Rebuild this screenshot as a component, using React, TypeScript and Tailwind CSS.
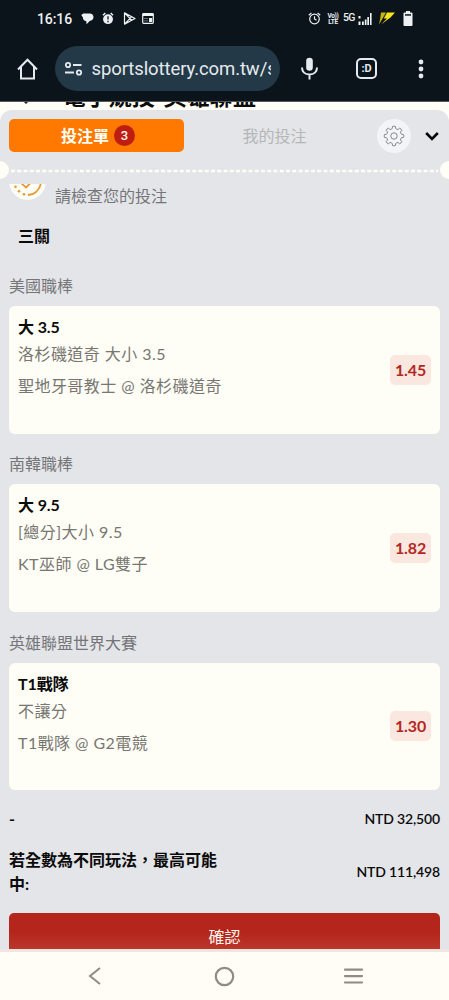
type Bet = {
  league: string;
  pick: string;
  market: string;
  match: string;
  odds: string;
};

const BETS: Bet[] = [
  {
    league: "美國職棒",
    pick: "大 3.5",
    market: "洛杉磯道奇 大小 3.5",
    match: "聖地牙哥教士 @ 洛杉磯道奇",
    odds: "1.45",
  },
  {
    league: "南韓職棒",
    pick: "大 9.5",
    market: "[總分]大小 9.5",
    match: "KT巫師 @ LG雙子",
    odds: "1.82",
  },
  {
    league: "英雄聯盟世界大賽",
    pick: "T1戰隊",
    market: "不讓分",
    match: "T1戰隊 @ G2電競",
    odds: "1.30",
  },
];

// Eight-toothed outline, one tooth every 45 degrees
const GEAR_POINTS = Array.from({ length: 8 }, (_, i) => {
  const at = (r: number, deg: number) => {
    const a = ((i * 45 + deg) * Math.PI) / 180;
    return `${(12 + r * Math.sin(a)).toFixed(2)} ${(12 - r * Math.cos(a)).toFixed(2)}`;
  };
  return `${at(8.4, -13)} L${at(10.5, -9)} Q${at(11.2, 0)} ${at(10.5, 9)} L${at(8.4, 13)} Q${at(7.8, 22.5)} ${at(8.4, 32)}`;
});
const GEAR_PATH = `M${GEAR_POINTS.join(" L")} Z`;

const StatusBar = () => (
  <div className="flex h-[37px] items-center justify-between pl-[37px] pr-[36px] text-[#eef1f3]">
    <div className="flex items-center">
      <span className="w-[36px] font-[Roboto] text-[14px] font-medium leading-none tracking-[-0.1px]">16:16</span>
      <svg className="ml-[8px]" width="13" height="12" viewBox="0 0 13 12" fill="currentColor">
        <path d="M3.5.5h5.2c2.3 0 3.8 1.6 3.8 3.6 0 2.2-1.6 3.7-3.8 3.8L5.6 11.3 5.2 8C3 7.7 1.9 6.3 1.9 4.4L.4 2.2C.9 1.1 2 .5 3.5.5z" />
      </svg>
      <svg className="ml-[8px]" width="12" height="13" viewBox="0 0 12 13">
        <circle cx="6" cy="7.2" r="4.9" fill="currentColor" />
        <path d="M1 3.2L3.3 1M11 3.2L8.7 1" stroke="currentColor" strokeWidth="1.5" />
        <path d="M6 4.2v3.4M6 8.8v1.4" stroke="#0b141a" strokeWidth="1.3" />
      </svg>
      <svg className="ml-[9px]" width="13" height="13" viewBox="0 0 13 13" fill="none" stroke="currentColor" strokeWidth="1.2" strokeLinejoin="round">
        <path d="M1.5.9v11.2L12 6.5zM1.5.9L8.7 8.3M1.5 12.1L8.7 4.7" />
      </svg>
      <svg className="ml-[6px]" width="12" height="11" viewBox="0 0 12 11">
        <rect x=".7" y=".7" width="10.6" height="9.6" rx=".8" fill="none" stroke="currentColor" strokeWidth="1.2" />
        <path d="M.7.7h10.6v2.4H.7zM7 5h3.2v4H7z" fill="currentColor" />
        <path d="M2 5.5h4M2 7.8h4" stroke="#76808a" strokeWidth=".8" />
      </svg>
    </div>
    <div className="flex items-center">
      <svg width="13" height="13" viewBox="0 0 13 13" fill="none" stroke="currentColor" strokeWidth="1.2">
        <circle cx="6.5" cy="7" r="4.8" />
        <path d="M.8 3.3L3.4 1M12.2 3.3L9.6 1M6.5 4.2V7l2 1.3" />
      </svg>
      <div className="ml-[6px] w-[12px] text-center font-[Roboto] text-[6.5px] font-bold leading-[6px] tracking-[-0.3px]">
        <div>Vo))</div>
        <div>LTE</div>
      </div>
      <span className="ml-[4px] w-[12px] font-[Roboto] text-[10.5px] font-medium leading-none tracking-[-0.8px]">5G</span>
      <svg className="ml-[3px]" width="14" height="12" viewBox="0 0 14 12" fill="currentColor">
        <path d="M.5 3h2v2.5h-2zM.5 8.5h2V12h-2zM4 8.5h1.8V12H4zM6.8 6.5h1.7V12H6.8zM9.3 4H11v8H9.3zM12 0h1.6v12H12z" />
      </svg>
      <svg className="ml-[7px]" width="16" height="13" viewBox="0 0 16 13">
        <path d="M2 .5h5L3.6 6.5 0 12.5 1.2 6.5z" fill="#c4b70c" />
        <path d="M8 .5h8L11.5 5.5 2 12.5 8 6.5H4.8z" fill="#f2e31a" />
      </svg>
      <svg className="ml-[8px]" width="10" height="15" viewBox="0 0 10 15" fill="currentColor">
        <path d="M3 0h4v1.5H3zM1.5 1.5h7a1 1 0 0 1 1 1V14a1 1 0 0 1-1 1h-7a1 1 0 0 1-1-1V2.5a1 1 0 0 1 1-1z" />
        <path d="M2 3.2h6v1.5H2z" fill="#0b141a" />
      </svg>
    </div>
  </div>
);

const BrowserBar = () => (
  <div className="flex h-[64px] items-center pb-px text-[#e5eaee]">
    <svg className="ml-[17px] shrink-0" width="21" height="22" viewBox="0 0 21 22" fill="none" stroke="currentColor" strokeWidth="2">
      <path d="M1 11.5L10.5 1.8 20 11.5M4 9v11.5h13V9" />
    </svg>
    <div className="ml-[17px] flex h-[45px] w-[225px] shrink-0 items-center rounded-full bg-[#243947] pl-[10px]">
      <svg className="shrink-0" width="18" height="16" viewBox="0 0 18 16" fill="none" stroke="currentColor" strokeWidth="1.8">
        <circle cx="3" cy="4" r="2.2" />
        <path d="M8 4h8.5M0 11.5h9" />
        <circle cx="14" cy="11.5" r="2.2" />
      </svg>
      <span className="ml-[8.5px] w-[179.5px] overflow-hidden whitespace-nowrap font-[Roboto] text-[18.5px] leading-[28px] tracking-[-0.1px]">
        sportslottery.com.tw/s
      </span>
    </div>
    <svg className="ml-[21px] shrink-0" width="17" height="23" viewBox="0 0 17 23" fill="none" stroke="currentColor" strokeWidth="2">
      <rect x="5.2" y=".8" width="6.6" height="13" rx="3.3" fill="currentColor" stroke="none" />
      <path d="M1 10.5c0 4.3 3 7 7.5 7s7.5-2.7 7.5-7M8.5 17.5v5" />
    </svg>
    <div className="ml-[38px] flex h-[21px] w-[21px] shrink-0 items-center justify-center rounded-[5px] border-2 border-current font-[Roboto] text-[11px] font-bold leading-none">
      :D
    </div>
    <svg className="ml-[41px] shrink-0" width="6" height="20" viewBox="0 0 6 20" fill="currentColor">
      <circle cx="3" cy="3" r="2.4" />
      <circle cx="3" cy="10" r="2.4" />
      <circle cx="3" cy="17" r="2.4" />
    </svg>
  </div>
);

const TabBar = () => (
  <div className="flex h-[51px] shrink-0 items-center pl-[9px]">
    <div className="flex h-[33px] w-[175px] items-center justify-center gap-[5px] rounded-[5px] bg-[#ff7900] pl-[3px]">
      <span className="text-[16px] font-bold leading-none text-[#fffef6]">投注單</span>
      <span className="flex h-[21px] w-[21px] items-center justify-center rounded-full bg-[#be1e12] font-[Roboto] text-[13px] font-medium leading-none text-[#fff5ee]">
        3
      </span>
    </div>
    <span className="w-[181px] text-center text-[16px] leading-none text-[#b5b6b8]">我的投注</span>
    <div className="ml-[12px] flex h-[34px] w-[34px] items-center justify-center rounded-full bg-[#f3f4f6]">
      <svg width="22" height="22" viewBox="0 0 24 24" fill="none" stroke="#7d7f83" strokeWidth="1">
        <path d={GEAR_PATH} />
        <circle cx="12" cy="12" r="3.5" />
      </svg>
    </div>
    <svg className="ml-[14px]" width="14" height="10" viewBox="0 0 14 10" fill="none" stroke="#080808" strokeWidth="2.6">
      <path d="M1.2 2L7 7.8 12.8 2" />
    </svg>
  </div>
);

const Perforation = () => (
  <div className="flex h-[18px] shrink-0 items-center">
    <div className="h-[18px] w-[9px] rounded-r-full bg-[#fffef6]" />
    <svg className="mt-[2px] flex-1" height="4" fill="none">
      <line x1="2" y1="2" x2="429" y2="2" stroke="#fffef6" strokeWidth="2.5" strokeDasharray="4 2.25" />
    </svg>
    <div className="h-[18px] w-[9px] rounded-l-full bg-[#fffef6]" />
  </div>
);

const BetCard = ({ bet }: { bet: Bet }) => (
  <section className="mb-[18.3px] h-[160px]">
    <h3 className="h-[32px] pt-[2px] text-[16px] leading-[20px] text-[#747578]">{bet.league}</h3>
    <div className="flex h-[127.5px] items-center justify-between rounded-[6px] bg-[#fffef6] px-[9px]">
      <div className="h-full pt-[9px] text-[#777671]">
        <div className="text-[16px] font-bold leading-[24px] tracking-[-0.1px] text-[#0b0b0b]">{bet.pick}</div>
        <div className="mt-[2px] text-[16px] leading-[26px] tracking-[0.45px]">{bet.market}</div>
        <div className="mt-[6px] text-[16px] leading-[26px] tracking-[0.45px]">{bet.match}</div>
      </div>
      <span className="flex h-[30px] w-[41px] items-center justify-center rounded-[5px] bg-[#f9e7e0] text-[16px] font-bold tracking-[-0.1px] text-[#b5271e]">
        {bet.odds}
      </span>
    </div>
  </section>
);

const NavBar = () => (
  <nav className="flex h-[48px] shrink-0 items-center bg-[#fffdf6] text-[#8f8c86]">
    <svg className="ml-[88px]" width="13" height="20" viewBox="0 0 13 20" fill="none" stroke="currentColor" strokeWidth="2">
      <path d="M12 2L2 10l10 8" />
    </svg>
    <svg className="ml-[113px]" width="21" height="21" viewBox="0 0 21 21" fill="none" stroke="currentColor" strokeWidth="2.2">
      <circle cx="10.5" cy="10.5" r="8.7" />
    </svg>
    <svg className="ml-[108px]" width="21" height="16" viewBox="0 0 21 16" stroke="currentColor" strokeWidth="2.2" strokeLinecap="round">
      <path d="M2 1.7h17M2 8.1h17M2 14.5h17" />
    </svg>
  </nav>
);

const App = () => {
  return (
    <div className="flex h-[1000px] w-[449px] flex-col overflow-hidden bg-[#fffef6] font-['Lato','Noto_Sans_CJK_TC',sans-serif]">
      <header className="h-[101px] shrink-0 bg-[#0b141a]">
        <StatusBar />
        <BrowserBar />
      </header>

      {/* Page title scrolled under the browser bar */}
      <div className="flex h-[9px] shrink-0 items-end overflow-hidden border-t border-[#55595a]">
        <svg className="mb-[6px] ml-[23px] shrink-0" width="6" height="2" viewBox="0 0 6 2" fill="none" stroke="#222" strokeWidth="1.5">
          <path d="M1-1l2 2 2-2" />
        </svg>
        <h1 className="mb-px ml-[33.5px] h-[26px] whitespace-nowrap text-[23px] font-bold leading-[26px] tracking-[0.1px] text-[#0b0b0b]">
          電子競技-英雄聯盟
        </h1>
      </div>

      <main className="flex min-h-0 flex-1 flex-col overflow-hidden rounded-t-[12px] bg-[#e4e5e8]">
        <TabBar />
        <Perforation />

        <div className="mt-[5px] flex h-[38px] shrink-0 items-start">
          <div className="ml-[9px] h-[17px] w-[37px] overflow-hidden">
            <svg className="-mt-[21px]" width="37" height="37" viewBox="0 0 37 37" fill="none">
              <circle cx="18.5" cy="18.5" r="18.3" fill="#fffef6" />
              <path d="M31.8 20.5A13.5 13.5 0 0 1 19 32" stroke="#e59a35" strokeWidth="1.8" />
              <g fill="#e59a35">
                <circle cx="6.5" cy="23.8" r="1.3" />
                <circle cx="10" cy="28.2" r="1.3" />
                <circle cx="15" cy="31.2" r="1.3" />
              </g>
              <path d="M11.5 19.5l5.5 5 7-7" stroke="#e59a35" strokeWidth="1.8" />
            </svg>
          </div>
          <span className="ml-[9px] mt-[2px] text-[16px] leading-[20px] text-[#747578]">請檢查您的投注</span>
        </div>
        <h2 className="ml-[18px] h-[52px] shrink-0 pt-[4px] text-[16px] font-bold leading-[20px] text-[#0b0b0b]">三關</h2>

        <div className="shrink-0 px-[9px]">
          {BETS.map((bet) => (
            <BetCard key={bet.league} bet={bet} />
          ))}
        </div>

        <div className="-mt-[2px] shrink-0 px-[9px] text-[#0b0b0b]">
          <div className="flex h-[24px] items-center justify-between font-bold">
            <span className="text-[16px]">-</span>
            <span className="text-[14px] font-semibold tracking-[-0.15px]">NTD 32,500</span>
          </div>
          <div className="mt-[17px] flex h-[48px] items-center justify-between font-bold">
            <span className="w-[212px] text-[16px] leading-[24px]">若全數為不同玩法，最高可能中:</span>
            <span className="text-[14px] font-semibold tracking-[-0.15px]">NTD 111,498</span>
          </div>
          <button className="mt-[17px] block h-[48px] w-full rounded-[5px] bg-[#b4261b] bg-linear-to-b from-[#b4261b] from-40% to-[#c04035] text-[16px] leading-[48px] text-[#fff5ee]">
            確認
          </button>
        </div>
      </main>

      <div className="h-[3px] shrink-0 bg-[#efe6e2]" />
      <NavBar />
    </div>
  );
};

export default App;
